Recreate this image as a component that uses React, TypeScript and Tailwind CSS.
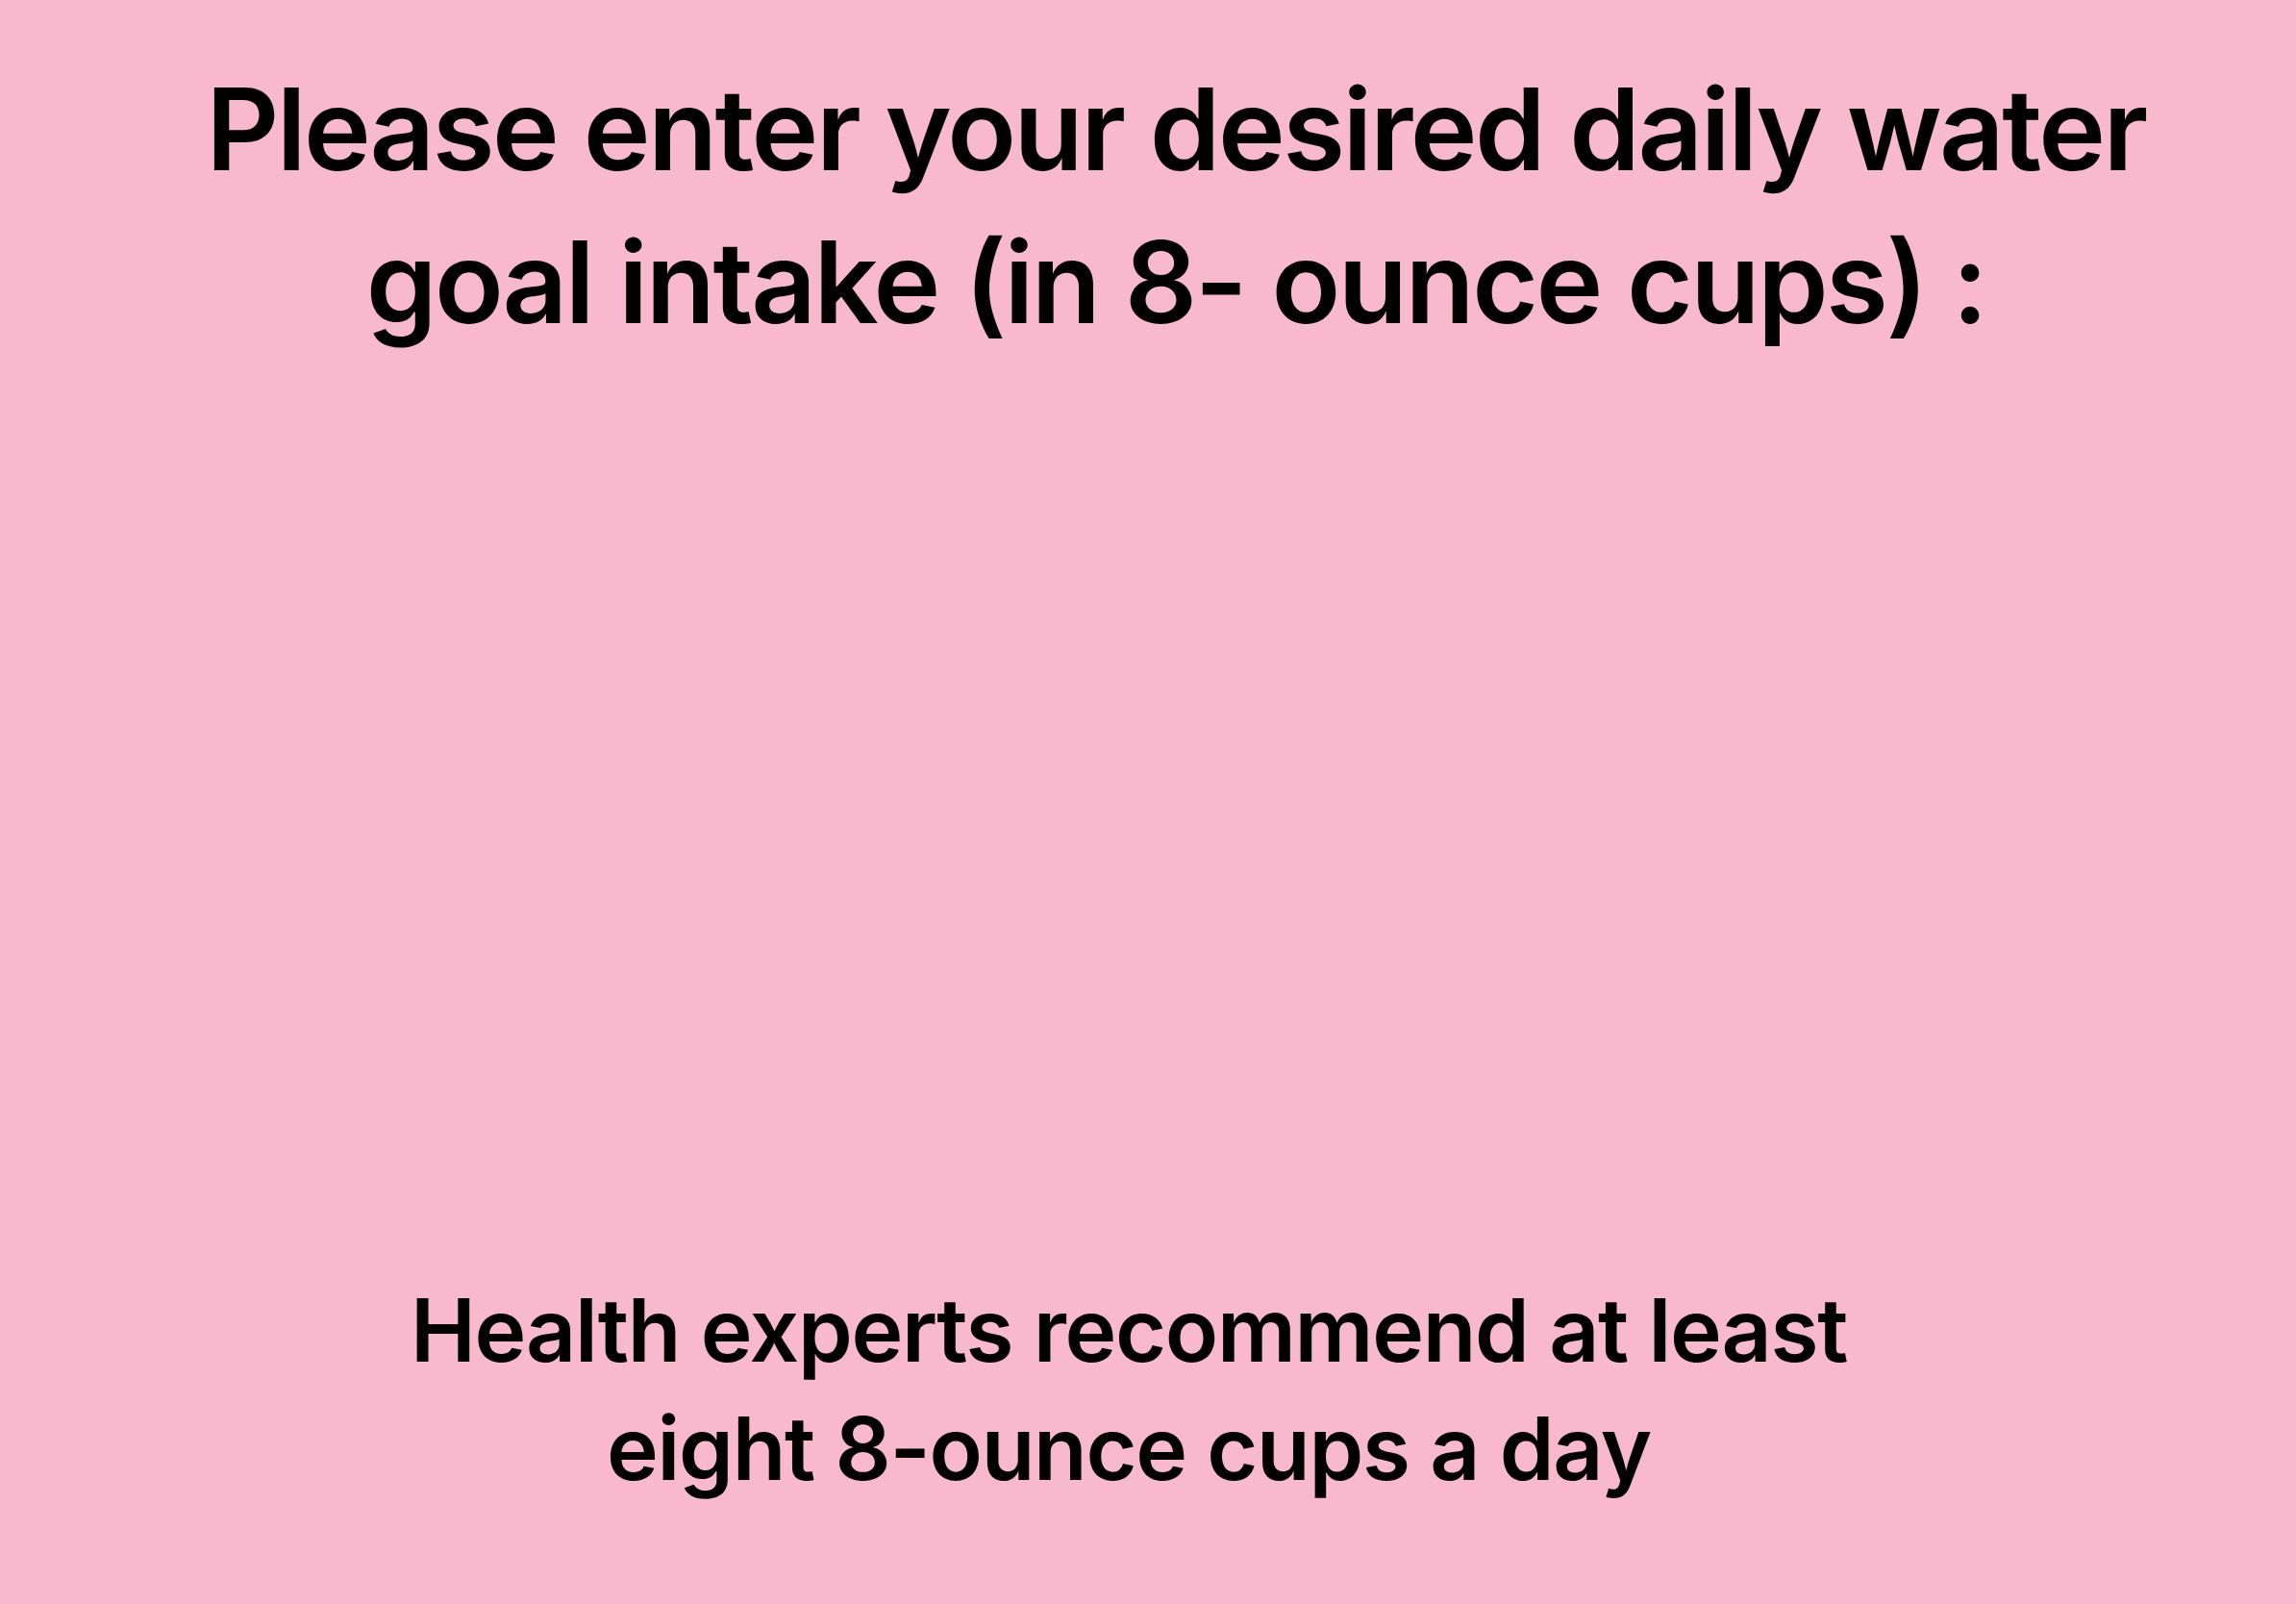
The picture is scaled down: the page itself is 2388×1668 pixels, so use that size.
export default function App() {
  return (
    <div
      className="w-[2388px] h-[1668px] bg-[#f8b8ce] flex flex-col items-center text-black"
      style={{ fontFamily: "Inter, 'Noto Sans', sans-serif" }}
    >
      <div className="pt-[55px] pl-[58px] text-center text-[118px] leading-[159px] font-semibold tracking-[-2.5px]">
        Please enter your desired daily water
        <br />
        goal intake (in 8- ounce cups) :
      </div>
      <div className="flex-1" />
      <div className="pb-[100px] pr-[40px] text-center text-[91px] leading-[123px] font-semibold tracking-[-1.3px]">
        Health experts recommend at least
        <br />
        eight 8-ounce cups a day
      </div>
    </div>
  );
}
